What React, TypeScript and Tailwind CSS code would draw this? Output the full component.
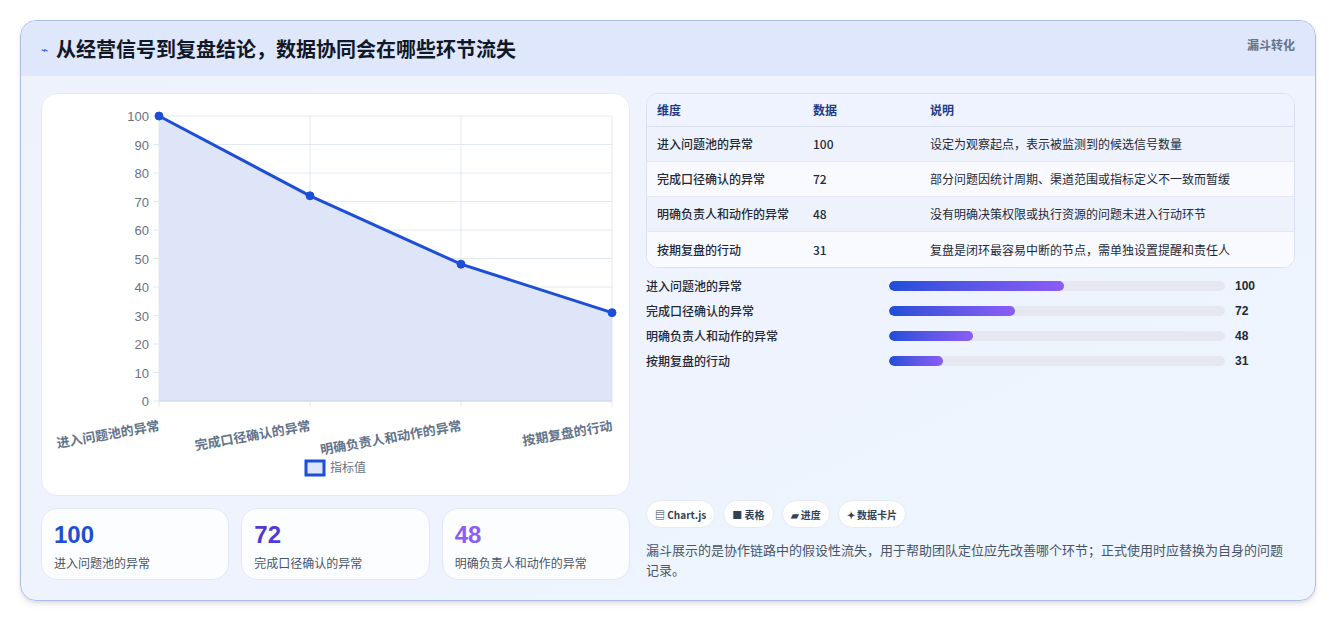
const font = { fontFamily: '"Noto Sans CJK SC", "Liberation Sans", sans-serif' };

const rows = [
  { name: "进入问题池的异常", value: 100, note: "设定为观察起点，表示被监测到的候选信号数量" },
  { name: "完成口径确认的异常", value: 72, note: "部分问题因统计周期、渠道范围或指标定义不一致而暂缓" },
  { name: "明确负责人和动作的异常", value: 48, note: "没有明确决策权限或执行资源的问题未进入行动环节" },
  { name: "按期复盘的行动", value: 31, note: "复盘是闭环最容易中断的节点，需单独设置提醒和责任人" },
];

function Chart() {
  const L = 117, R = 570, T = 22, B = 307;
  const xs = rows.map((_, i) => L + ((R - L) * i) / 3);
  const y = (v: number) => B - ((B - T) * v) / 100;
  const pts = rows.map((r, i) => `${xs[i]},${y(r.value)}`).join(" ");
  return (
    <svg width="589" height="403" className="block">
      {[0, 10, 20, 30, 40, 50, 60, 70, 80, 90, 100].map((v) => (
        <g key={v}>
          <line x1={L - 6} x2={R} y1={y(v)} y2={y(v)} stroke="#e2e8f0" />
          <text x={L - 10} y={y(v) + 5} textAnchor="end" fontSize="13" fill="#6b7280" fontFamily="Liberation Sans">
            {v}
          </text>
        </g>
      ))}
      {xs.map((x, i) => (
        <line key={i} x1={x} x2={x} y1={T} y2={B + 6} stroke="#e2e8f0" />
      ))}
      <polygon points={`${L},${B} ${pts} ${R},${B}`} fill="#dfe5f8" />
      <line x1={L} x2={R} y1={B} y2={B} stroke="#cbd5e1" />
      <polyline points={pts} fill="none" stroke="#1d4ed8" strokeWidth="3" />
      {rows.map((r, i) => (
        <circle key={i} cx={xs[i]} cy={y(r.value)} r="4" fill="#1d4ed8" stroke="#1d4ed8" />
      ))}
      {rows.map((r, i) => (
        <text
          key={i}
          x={xs[i] + 1}
          y={336}
          textAnchor="end"
          fontSize="13"
          fontWeight="bold"
          fill="#64748b"
          transform={`rotate(-10 ${xs[i] + 1} 336)`}
          style={font}
        >
          {r.name}
        </text>
      ))}
      <rect x="264" y="367" width="18" height="14" fill="#dfe5f8" stroke="#1d4ed8" strokeWidth="3" />
      <text x="288" y="378" fontSize="12" fill="#6b7280" style={font}>
        指标值
      </text>
    </svg>
  );
}

export default function App() {
  return (
    <div className="min-h-screen bg-white p-5 pb-0" style={font}>
      <div className="rounded-2xl border border-[#aebde6] bg-gradient-to-br from-[#eef2fd] to-[#eef5ff] overflow-hidden shadow-md">
        <div className="h-[55px] bg-[#dfe7fd] flex items-center justify-between pl-5 pr-5">
          <div className="flex items-center gap-2">
            <span className="text-[#2563eb] text-xs">⌁</span>
            <h1 className="text-[20px] font-bold text-[#111827]">从经营信号到复盘结论，数据协同会在哪些环节流失</h1>
          </div>
          <span className="text-xs font-bold text-[#64748b] self-start mt-4">漏斗转化</span>
        </div>
        <div className="flex gap-4 px-5 pt-[17px] pb-5">
          <div className="w-[589px] flex flex-col gap-3">
            <div className="bg-white rounded-2xl border border-[#e5eaf5] h-[403px]">
              <Chart />
            </div>
            <div className="grid grid-cols-3 gap-3">
              {rows.slice(0, 3).map((r, i) => (
                <div key={i} className="h-[72px] bg-white/80 rounded-2xl border border-[#e0e7f5] px-3 pt-3">
                  <div
                    className={`text-[24px] font-extrabold leading-7 ${
                      i === 0 ? "text-[#1d4ed8]" : i === 1 ? "text-[#4f3ad8]" : "text-[#8b5cf6]"
                    }`}
                    style={{ fontFamily: '"Liberation Sans", sans-serif' }}
                  >
                    {r.value}
                  </div>
                  <div className="text-xs text-[#475569] mt-1.5">{r.name}</div>
                </div>
              ))}
            </div>
          </div>
          <div className="flex-1 flex flex-col">
            <div className="rounded-xl border border-[#d9e1f0] overflow-hidden bg-white">
              <div className="grid grid-cols-[156px_117px_1fr] h-[33px] items-center px-2.5 text-xs font-bold text-[#1e3a8a] bg-[#eef3ff] border-b border-[#d9e1f0]">
                <span>维度</span>
                <span>数据</span>
                <span>说明</span>
              </div>
              {rows.map((r, i) => (
                <div
                  key={i}
                  className={`grid grid-cols-[156px_117px_1fr] h-[35px] items-center px-2.5 text-xs text-[#1f2937] ${
                    i % 2 === 0 ? "bg-[#eef2fc]" : "bg-[#f8faff]"
                  } ${i < 3 ? "border-b border-[#e3e8f3]" : ""}`}
                >
                  <span className="font-medium">{r.name}</span>
                  <span className="font-medium">{r.value}</span>
                  <span>{r.note}</span>
                </div>
              ))}
            </div>
            <div className="flex flex-col gap-[9px] mt-2.5">
              {rows.map((r, i) => (
                <div key={i} className="flex items-center h-4 text-xs font-medium text-[#1f2937]">
                  <span className="w-[243px]">{r.name}</span>
                  <div className="w-[336px] h-2.5 rounded-full bg-[#e5e8f0] overflow-hidden">
                    <div
                      className="h-full rounded-full bg-gradient-to-r from-[#1d4ed8] to-[#8b5cf6]"
                      style={{ width: `${r.value * 0.52}%` }}
                    />
                  </div>
                  <span className="ml-2.5 font-bold" style={{ fontFamily: '"Liberation Sans", sans-serif' }}>
                    {r.value}
                  </span>
                </div>
              ))}
            </div>
            <div className="mt-auto">
              <div className="flex gap-2">
                {["▤ Chart.js", "■ 表格", "▰ 进度", "✦ 数据卡片"].map((t) => (
                  <span key={t} className="h-7 px-2 flex items-center rounded-full bg-white border border-[#e5eaf5] text-[10px] font-bold text-[#334155]">
                    {t}
                  </span>
                ))}
              </div>
              <p className="mt-3 text-[13px] leading-5 text-[#475569]">
                漏斗展示的是协作链路中的假设性流失，用于帮助团队定位应先改善哪个环节；正式使用时应替换为自身的问题记录。
              </p>
            </div>
          </div>
        </div>
      </div>
    </div>
  );
}
